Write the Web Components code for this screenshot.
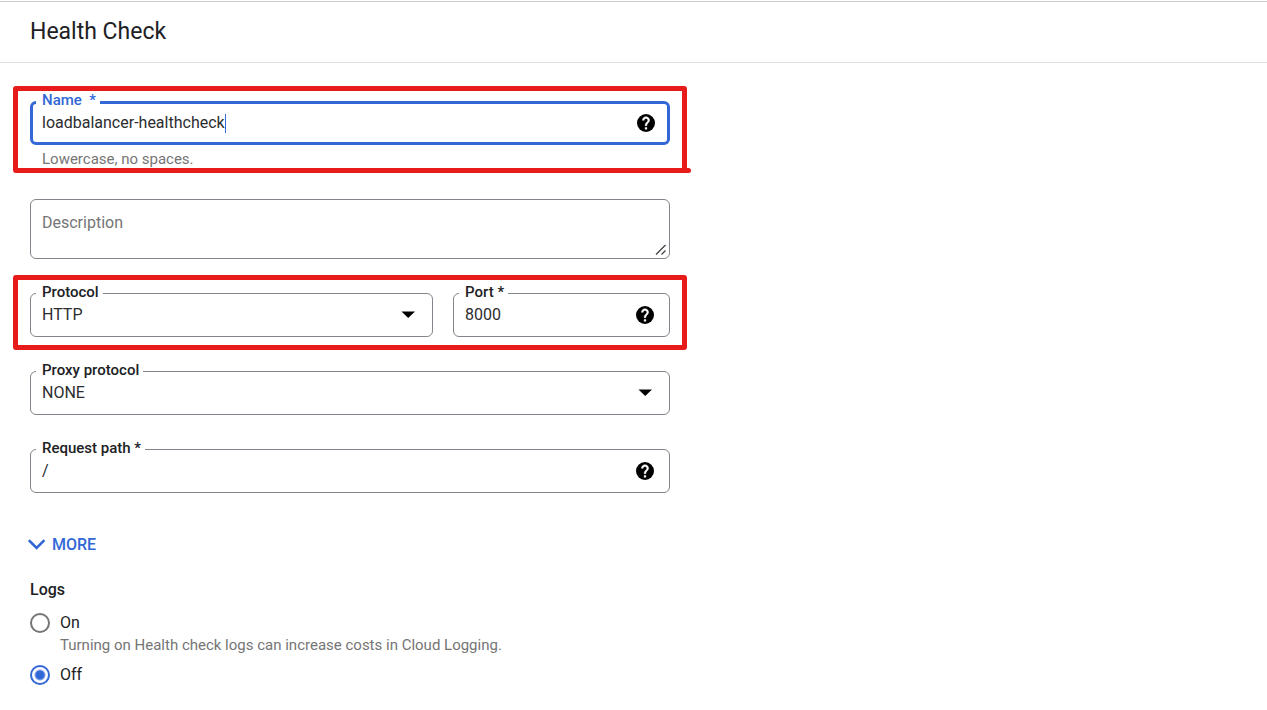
<!DOCTYPE html>
<html lang="en">
<head>
<meta charset="utf-8">
<meta name="viewport" content="width=device-width, initial-scale=1">
<title>Health Check</title>
<style>
  body {
    margin: 0;
    background: #fff;
    color: #202124;
    font: 16px/20px Roboto, "Liberation Sans", sans-serif;
  }
</style>
</head>
<body>
<page-header>Health Check</page-header>
<health-form>
  <marked-area tail>
    <form-field label="Name &nbsp;*" type="text" value="loadbalancer-healthcheck" hint="Lowercase, no spaces." icon="help" active></form-field>
  </marked-area>
  <form-field label="Description" type="textarea"></form-field>
  <marked-area>
    <field-row>
      <form-field label="Protocol" type="select" value="HTTP"></form-field>
      <form-field label="Port *" type="text" value="8000" icon="help"></form-field>
    </field-row>
  </marked-area>
  <form-field label="Proxy protocol" type="select" value="NONE"></form-field>
  <form-field label="Request path *" type="text" value="/" icon="help"></form-field>
  <more-button>MORE</more-button>
  <logs-choice></logs-choice>
</health-form>

<script>
const HELP_ICON = `
  <svg class="icon" width="18" height="18" viewBox="2 2 20 20" aria-hidden="true">
    <circle cx="12" cy="12" r="10" fill="#000"/>
    <path fill="#fff" stroke="#fff" stroke-width=".5" d="M13 19h-2v-2h2v2zm2.07-7.75l-.9.92C13.45 12.9 13 13.5 13 15h-2v-.5c0-1.1.45-2.1 1.17-2.83l1.24-1.26c.37-.36.59-.86.59-1.41 0-1.1-.9-2-2-2s-2 .9-2 2H8c0-2.21 1.79-4 4-4s4 1.79 4 4c0 .88-.36 1.68-.93 2.25z"/>
  </svg>`;

const ARROW_ICON = `
  <svg class="icon" width="18" height="18" viewBox="0 0 18 18" aria-hidden="true">
    <path fill="#000" d="M2.5 5.5h13.5L9.2 12z"/>
  </svg>`;

class PageHeader extends HTMLElement {
  constructor() {
    super();
    this.attachShadow({ mode: 'open' }).innerHTML = `
      <style>
        :host {
          display: block;
          margin-top: 1px;
          padding: 16px 30px;
          border-top: 1px solid #ccc;
          border-bottom: 1px solid #e0e0e0;
        }
        h1 {
          margin: 0;
          font-size: 23px;
          line-height: 28px;
          font-weight: 400;
          color: #202124;
        }
      </style>
      <h1><slot></slot></h1>
    `;
  }
}

class HealthForm extends HTMLElement {
  constructor() {
    super();
    this.attachShadow({ mode: 'open' }).innerHTML = `
      <style>
        :host {
          display: block;
          padding: 38px 30px 24px;
        }
        form {
          display: flex;
          flex-direction: column;
          gap: 34px;
          max-width: 640px;
        }
      </style>
      <form><slot></slot></form>
    `;
  }
}

// Red hand-drawn frame around whatever is slotted in
class MarkedArea extends HTMLElement {
  constructor() {
    super();
    this.attachShadow({ mode: 'open' }).innerHTML = `
      <style>
        :host {
          display: block;
          position: relative;
        }
        .frame {
          position: absolute;
          inset: -18px -17px -13px;
          border: 5px solid #e81b1b;
          border-radius: 3px;
          pointer-events: none;
        }
        :host([tail]) .frame { inset: -15px -17px -8px; }
        :host([tail]) .frame::after {
          content: "";
          position: absolute;
          right: -9px;
          bottom: -5px;
          width: 16px;
          height: 5px;
          border-radius: 3px;
          background: #e81b1b;
        }
      </style>
      <slot></slot>
      <div class="frame"></div>
    `;
  }
}

class FieldRow extends HTMLElement {
  constructor() {
    super();
    this.attachShadow({ mode: 'open' }).innerHTML = `
      <style>
        :host {
          display: grid;
          grid-template-columns: 403fr 217fr;
          gap: 20px;
        }
      </style>
      <slot></slot>
    `;
  }
}

class FormField extends HTMLElement {
  constructor() {
    super();
    this.attachShadow({ mode: 'open' });
  }

  connectedCallback() {
    this.render();
  }

  control(type, value) {
    if (type === 'select') {
      return `<select id="control"><option>${value}</option></select>${ARROW_ICON}`;
    }
    if (type === 'textarea') {
      return `
        <textarea id="control" placeholder="${this.getAttribute('label')}" aria-label="${this.getAttribute('label')}"></textarea>
        <svg class="grip" width="12" height="12" viewBox="0 0 12 12" aria-hidden="true">
          <path d="M1 10.5L10.5 1M6.5 10.5l4-4" stroke="#444" stroke-width="1.3" fill="none"/>
        </svg>`;
    }
    const caret = this.hasAttribute('active') ? '<span class="caret"></span><span class="fill"></span>' : '';
    return `<input id="control" type="text" value="${value}">${caret}${this.hasAttribute('icon') ? HELP_ICON : ''}`;
  }

  render() {
    const type = this.getAttribute('type');
    const hint = this.getAttribute('hint');

    this.shadowRoot.innerHTML = `
      <style>
        :host {
          display: block;
          position: relative;
          min-width: 0;
        }
        :host([hint]) { margin-bottom: -4px; }
        .box {
          display: flex;
          align-items: center;
          box-sizing: border-box;
          height: 44px;
          padding: 0 15px 0 11px;
          border: 1px solid #80868b;
          border-radius: 6px;
        }
        :host([active]) .box {
          padding: 0 12px 0 9px;
          border: 3px solid #3367d6;
        }
        :host([type="textarea"]) .box {
          height: 60px;
          padding-right: 2px;
        }
        label {
          position: absolute;
          top: -9px;
          left: 6px;
          padding: 0 4px 0 6px;
          background: #fff;
          font-size: 15px;
          line-height: 16px;
          font-weight: 500;
          white-space: nowrap;
        }
        :host([active]) label { color: #3367d6; }
        input, select, textarea {
          flex: 1;
          min-width: 0;
          margin: 0;
          padding: 0;
          border: 0;
          outline: 0;
          background: none;
          color: #2c2d30;
          font: inherit;
          appearance: none;
        }
        :host([active]) input {
          flex: none;
          field-sizing: content;
          caret-color: transparent;
        }
        textarea {
          height: 40px;
          padding: 4px 0 0;
          box-sizing: border-box;
          resize: none;
        }
        textarea::placeholder { color: #757575; }
        .caret {
          width: 1px;
          height: 19px;
          background: #3367d6;
        }
        .fill { flex: 1; }
        .icon { flex: none; }
        select + .icon {
          margin-left: -18px;
          pointer-events: none;
        }
        .grip {
          align-self: flex-end;
          margin-bottom: 2px;
        }
        .hint {
          padding: 4px 12px 0;
          color: #757575;
          font-size: 15px;
          line-height: 20px;
        }
      </style>
      <div class="box">${this.control(type, this.getAttribute('value'))}</div>
      ${type === 'textarea' ? '' : `<label for="control">${this.getAttribute('label')}</label>`}
      ${hint ? `<div class="hint">${hint}</div>` : ''}
    `;
  }
}

class MoreButton extends HTMLElement {
  constructor() {
    super();
    this.attachShadow({ mode: 'open' }).innerHTML = `
      <style>
        :host {
          display: block;
          margin-top: 8px;
        }
        button {
          display: flex;
          align-items: center;
          gap: 6px;
          margin: 0 0 0 -2px;
          padding: 0;
          border: 0;
          background: none;
          color: #3367d6;
          font: inherit;
          font-weight: 500;
          cursor: pointer;
        }
      </style>
      <button type="button">
        <svg width="18" height="12" viewBox="0 0 18 12" aria-hidden="true">
          <path d="M.8 1.2l7.8 7.8 7.8-7.8" fill="none" stroke="currentColor" stroke-width="2.6"/>
        </svg>
        <slot></slot>
      </button>
    `;
  }
}

class LogsChoice extends HTMLElement {
  constructor() {
    super();
    this.attachShadow({ mode: 'open' }).innerHTML = `
      <style>
        :host {
          display: block;
          margin-top: -9px;
        }
        fieldset {
          margin: 0;
          padding: 0;
          border: 0;
        }
        legend {
          padding: 0;
          margin-bottom: 13px;
          font-weight: 500;
        }
        label {
          display: flex;
          align-items: center;
          gap: 10px;
        }
        input {
          appearance: none;
          box-sizing: border-box;
          width: 20px;
          height: 20px;
          margin: 0;
          border: 2px solid #757575;
          border-radius: 50%;
        }
        input:checked {
          border-color: #3367d6;
          background: radial-gradient(circle, #3367d6 4px, transparent 6px);
        }
        p {
          margin: 2px 0 10px 30px;
          color: #757575;
          font-size: 15px;
        }
      </style>
      <fieldset>
        <legend>Logs</legend>
        <label><input type="radio" name="logs" aria-describedby="note">On</label>
        <p id="note">Turning on Health check logs can increase costs in Cloud Logging.</p>
        <label><input type="radio" name="logs" checked>Off</label>
      </fieldset>
    `;
  }
}

customElements.define('page-header', PageHeader);
customElements.define('health-form', HealthForm);
customElements.define('marked-area', MarkedArea);
customElements.define('field-row', FieldRow);
customElements.define('form-field', FormField);
customElements.define('more-button', MoreButton);
customElements.define('logs-choice', LogsChoice);
</script>
</body>
</html>
